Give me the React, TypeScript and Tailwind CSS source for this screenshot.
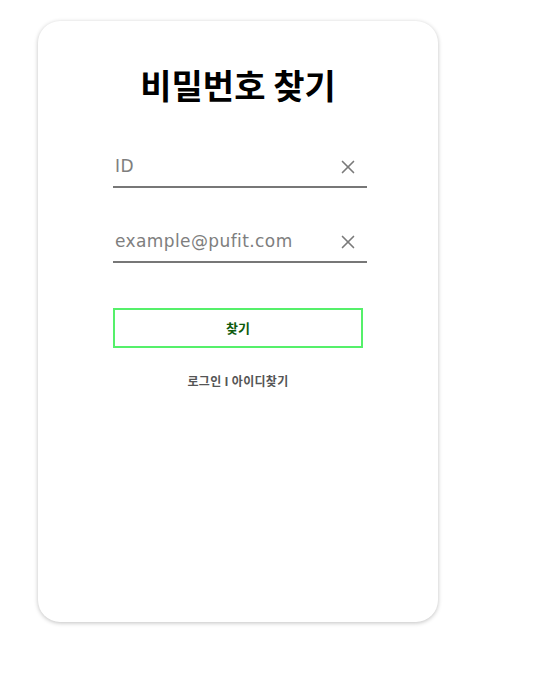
import { X } from "lucide-react";

const fields = [{ placeholder: "ID" }, { placeholder: "example@pufit.com" }];

export default function App() {
  return (
    <div className="min-h-[678px] w-[545px] bg-white">
      <div className="ml-[38px] pt-[21px]">
        <div className="flex h-[601px] w-[400px] flex-col items-center rounded-[22px] bg-white pt-[44px] shadow-[0_1px_4px_rgba(0,0,0,0.25)]">
          <h1
            className="text-[34px] font-bold leading-[40px] text-black"
            style={{ fontFamily: '"Noto Sans CJK KR", sans-serif' }}
          >
            비밀번호 찾기
          </h1>
          <div className="mt-[30px] ml-[75px] flex w-[254px] flex-col gap-[22px] self-start">
            {fields.map((f) => (
              <div
                key={f.placeholder}
                className="flex h-[53px] items-center justify-between border-b-2 border-[#777777] pt-[12px]"
              >
                <input
                  placeholder={f.placeholder}
                  className="w-[210px] bg-transparent pl-[2px] text-[17px] tracking-[0.4px] text-[#555] outline-none placeholder:text-[#7e7e7e]"
                  style={{ fontFamily: '"DejaVu Sans", sans-serif' }}
                />
                <X className="mr-[8px] h-[22px] w-[22px] text-[#7a7a7a]" strokeWidth={1.8} />
              </div>
            ))}
          </div>
          <button
            className="mt-[45px] ml-[75px] h-[40px] w-[250px] self-start border-2 border-[#55f06a] text-[13px] font-bold text-[#0d5a0d]"
            style={{ fontFamily: '"Noto Sans CJK KR", sans-serif' }}
          >
            찾기
          </button>
          <div
            className="mt-[24px] text-[12px] font-bold tracking-[0.3px] text-[#555]"
            style={{ fontFamily: '"Noto Sans CJK KR", sans-serif' }}
          >
            로그인 I 아이디찾기
          </div>
        </div>
      </div>
    </div>
  );
}
